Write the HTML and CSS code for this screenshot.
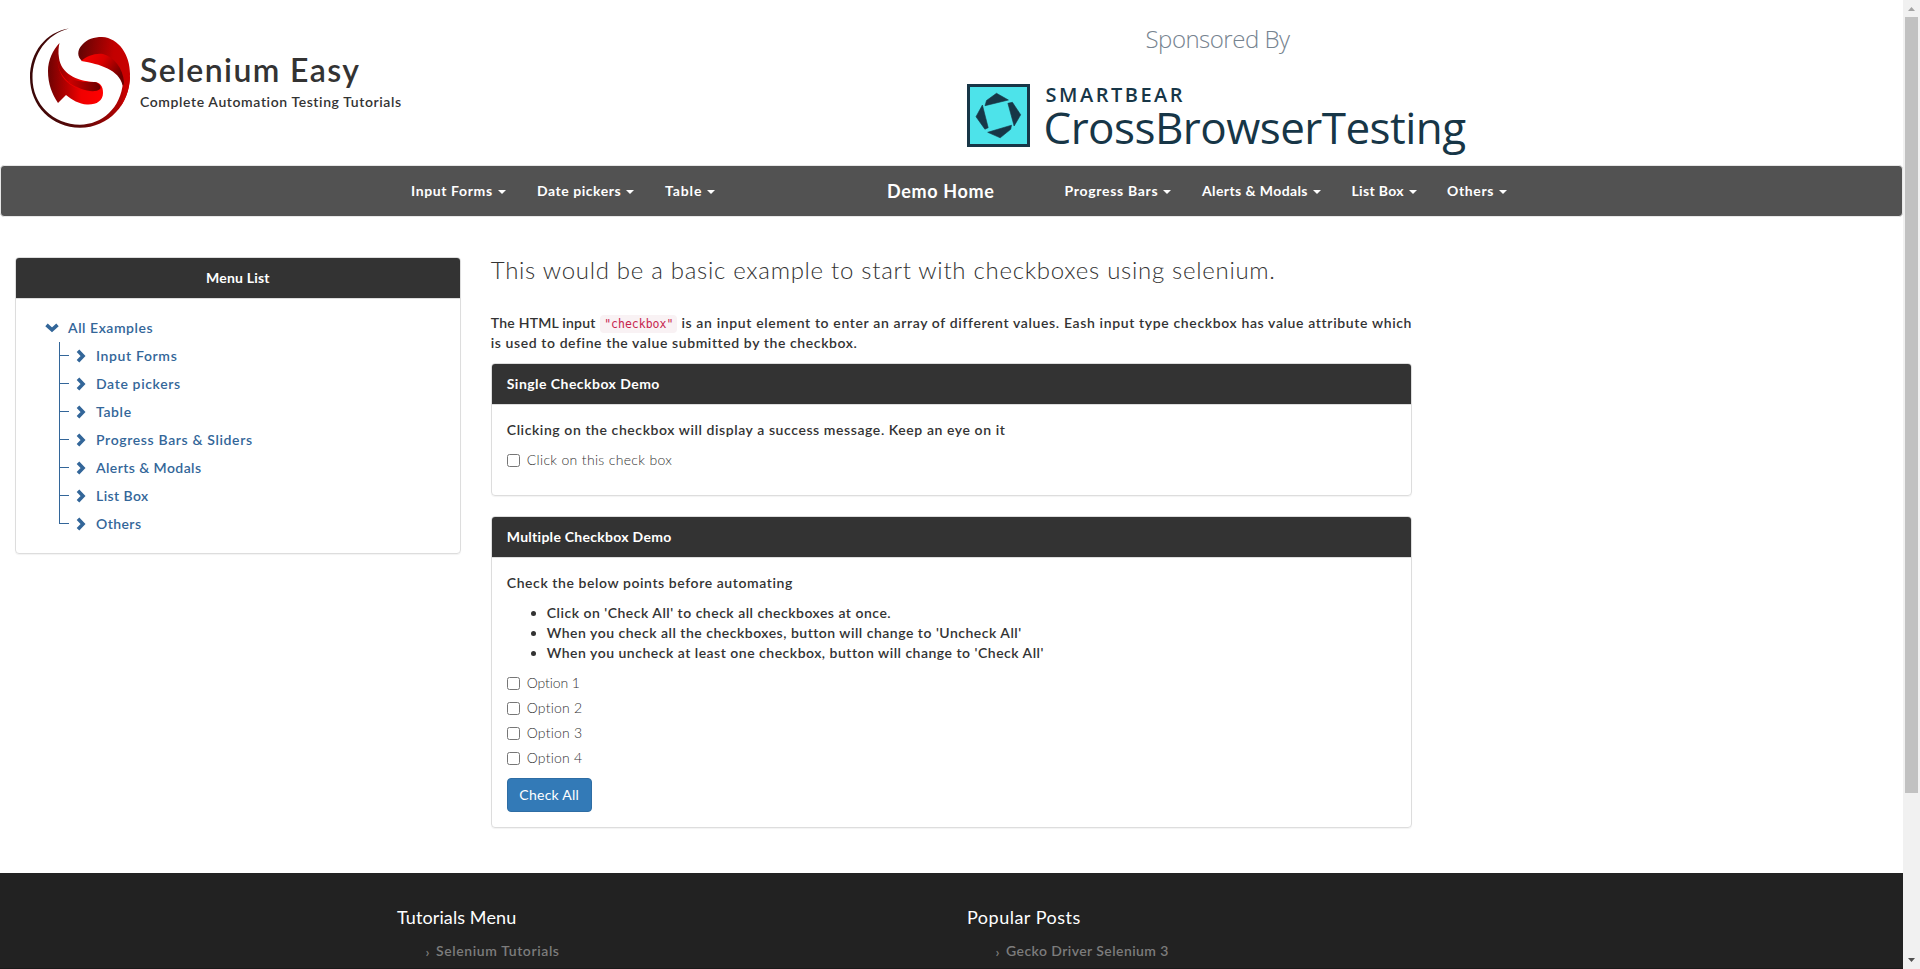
FILE: index.html
```html
<!DOCTYPE html>
<html lang="en">
<head>
<meta charset="utf-8">
<title>Selenium Easy</title>
<link rel="stylesheet" href="styles.css">
</head>
<body>
<div class="page">
  <header class="header">
    <a class="brand">
      <svg class="brand-logo" width="100" height="100" viewBox="0 0 100 100">
        <defs>
          <linearGradient id="ring" x1="0" y1="0" x2="1" y2="0">
            <stop offset="0" stop-color="#3a0808"/><stop offset=".5" stop-color="#5a0808"/><stop offset="1" stop-color="#c80000"/>
          </linearGradient>
          <linearGradient id="cap" x1="0" y1="0" x2="1" y2=".2">
            <stop offset="0" stop-color="#5c0404"/><stop offset=".7" stop-color="#c20000"/><stop offset="1" stop-color="#c80000"/>
          </linearGradient>
          <linearGradient id="band" x1="0" y1="0" x2="1" y2=".5">
            <stop offset="0" stop-color="#ff0000"/><stop offset=".5" stop-color="#d80000"/><stop offset="1" stop-color="#700000"/>
          </linearGradient>
          <linearGradient id="tail" x1="0" y1="0" x2="1" y2="0">
            <stop offset="0" stop-color="#6e0303"/><stop offset=".35" stop-color="#b80000"/><stop offset=".6" stop-color="#f00000"/><stop offset="1" stop-color="#ff0000"/>
          </linearGradient>
          <linearGradient id="fold" x1="0" y1="0" x2="1" y2="0">
            <stop offset="0" stop-color="#d00000"/><stop offset="1" stop-color="#6a0000"/>
          </linearGradient>
        </defs>
        <path fill="url(#ring)" d="M39 .5C16 4 0 24 0 49.500C0 78 22 99.700 50 99.700C79 99.700 100 76 100 48L93 54C91 80 72 96.500 50 96.700C23 96.500 2.500 76 2.500 50C2.500 26 17 6 39 .5Z"/>
        <path fill="url(#cap)" d="M52 33C47 29 47 22 52 17C57 11 64 9 72 9C89 10 100 27 100 46C100 60 96 70 91 78C94 68 94 60 92.500 54C89 40 76 34 52 33Z"/>
        <path fill="url(#band)" d="M51 33C57 28 65 25 73 26C84 29 93 40 94 54C94 57 93 58 92.500 57C89 42 70 36 51 33Z"/>
        <path fill="url(#tail)" d="M29.500 15C23 22 18 32 18 43C18 56 22 66 28 75L36 67C42 72 49 76 57 76.500C66 77 73 73 73 65C73 58 70 54 64 54C46 53 31 45 29 30C28 24 28.500 19 29.500 15Z"/>
        <path fill="#ee0000" d="M29.500 15C26 29 27 43 35 52C44 61 56 65 68 62C58 66 42 60 33 48C26 39 27 25 29.500 15Z"/>
        <path fill="url(#fold)" d="M42 51C49 54 57 54 65 54C69 55 72 59 70 61C64 66 50 62 38 54Z"/>
      </svg>
      <span class="brand-text">
        <span class="brand-name">Selenium Easy</span>
        <span class="brand-tag">Complete Automation Testing Tutorials</span>
      </span>
    </a>
    <div class="sponsor">
      <div class="sponsor-by">Sponsored By</div>
      <div class="sponsor-row">
        <svg width="63" height="63" viewBox="0 0 63 63">
          <rect x="1.500" y="1.500" width="60" height="60" fill="#4de3ea" stroke="#173647" stroke-width="3"/>
          <g fill="#173647" stroke="#173647" stroke-width=".6" stroke-linejoin="round">
            <path d="M18 21.700L19.500 16.500L29.500 9.300L41.400 16Z"/>
            <path d="M40.900 19.300L45.400 18.300L53.700 30.800L47.100 42Z"/>
            <path d="M44.500 41.200L43.700 45.300L33.200 53.800L20.700 48.300Z"/>
            <path d="M15.400 21L21.200 43.700L17.900 45.200L9 32.700Z"/>
          </g>
        </svg>
        <div class="sponsor-text">
          <span class="sponsor-maker">SMARTBEAR</span>
          <span class="sponsor-name">CrossBrowserTesting</span>
        </div>
      </div>
    </div>
  </header>

  <nav class="navbar">
    <a class="n1"><span>Input Forms</span><i class="caret"></i></a>
    <a class="n2"><span>Date pickers</span><i class="caret"></i></a>
    <a class="n3"><span>Table</span><i class="caret"></i></a>
    <a class="home">Demo Home</a>
    <a class="n4"><span>Progress Bars</span><i class="caret"></i></a>
    <a class="n5"><span>Alerts &amp; Modals</span><i class="caret"></i></a>
    <a class="n6"><span>List Box</span><i class="caret"></i></a>
    <a class="n7"><span>Others</span><i class="caret"></i></a>
  </nav>

  <main class="content">
    <aside class="panel menu">
      <div class="panel-heading menu-heading">Menu List</div>
      <div class="menu-body">
        <div class="root"><svg width="14" height="10" viewBox="0 0 14 10"><path d="M1.500 1.800L7 6.800L12.500 1.800" fill="none" stroke="#336699" stroke-width="3.600"/></svg><span>All Examples</span></div>
        <ul class="tree">
          <li><svg class="chev" width="10" height="14" viewBox="0 0 10 14"><path d="M2 1.800L7 7L2 12.200" fill="none" stroke="#336699" stroke-width="3.600"/></svg><span>Input Forms</span></li>
          <li><svg class="chev" width="10" height="14" viewBox="0 0 10 14"><path d="M2 1.800L7 7L2 12.200" fill="none" stroke="#336699" stroke-width="3.600"/></svg><span>Date pickers</span></li>
          <li><svg class="chev" width="10" height="14" viewBox="0 0 10 14"><path d="M2 1.800L7 7L2 12.200" fill="none" stroke="#336699" stroke-width="3.600"/></svg><span>Table</span></li>
          <li><svg class="chev" width="10" height="14" viewBox="0 0 10 14"><path d="M2 1.800L7 7L2 12.200" fill="none" stroke="#336699" stroke-width="3.600"/></svg><span>Progress Bars &amp; Sliders</span></li>
          <li class="tight"><svg class="chev" width="10" height="14" viewBox="0 0 10 14"><path d="M2 1.800L7 7L2 12.200" fill="none" stroke="#336699" stroke-width="3.600"/></svg><span>Alerts &amp; Modals</span></li>
          <li class="tight"><svg class="chev" width="10" height="14" viewBox="0 0 10 14"><path d="M2 1.800L7 7L2 12.200" fill="none" stroke="#336699" stroke-width="3.600"/></svg><span>List Box</span></li>
          <li class="tight"><svg class="chev" width="10" height="14" viewBox="0 0 10 14"><path d="M2 1.800L7 7L2 12.200" fill="none" stroke="#336699" stroke-width="3.600"/></svg><span>Others</span></li>
        </ul>
      </div>
    </aside>

    <section class="main">
      <h3>This would be a basic example to start with checkboxes using selenium.</h3>
      <p class="intro"><span class="lead">The HTML input</span><code>"checkbox"</code>is an input element to enter an array of different values. Eash input type checkbox has value attribute which<br><span class="line2">is used to define the value submitted by the checkbox.</span></p>

      <div class="panel">
        <div class="panel-heading">Single Checkbox Demo</div>
        <div class="panel-body">
          <p class="hint">Clicking on the checkbox will display a success message. Keep an eye on it</p>
          <label class="check single"><input type="checkbox"><span>Click on this check box</span></label>
        </div>
      </div>

      <div class="panel">
        <div class="panel-heading multi">Multiple Checkbox Demo</div>
        <div class="panel-body">
          <p class="hint">Check the below points before automating</p>
          <ul class="points">
            <li>Click on 'Check All' to check all checkboxes at once.</li>
            <li>When you check all the checkboxes, button will change to 'Uncheck All'</li>
            <li>When you uncheck at least one checkbox, button will change to 'Check All'</li>
          </ul>
          <div class="options">
            <label class="check first"><input type="checkbox"><span>Option 1</span></label>
            <label class="check"><input type="checkbox"><span>Option 2</span></label>
            <label class="check"><input type="checkbox"><span>Option 3</span></label>
            <label class="check"><input type="checkbox"><span>Option 4</span></label>
          </div>
          <button class="btn" type="button">Check All</button>
        </div>
      </div>
    </section>
  </main>

  <footer class="footer">
    <div class="footer-col">
      <h4>Tutorials Menu</h4>
      <a><i>›</i><span>Selenium Tutorials</span></a>
    </div>
    <div class="footer-col posts">
      <h4>Popular Posts</h4>
      <a><i>›</i><span>Gecko Driver Selenium 3</span></a>
    </div>
  </footer>
</div>
<div class="scrollbar">
  <svg width="17" height="17" viewBox="0 0 17 17"><path d="M5 11L8.500 7L12 11Z" fill="#a3a3a3"/></svg>
  <div class="thumb"></div>
  <svg class="down" width="17" height="17" viewBox="0 0 17 17"><path d="M5 6L8.500 10L12 6Z" fill="#505050"/></svg>
</div>
</body>
</html>
```

FILE: styles.css
```css
* { box-sizing: border-box; }
body {
  margin: 0;
  height: 969px;
  overflow: hidden;
  display: flex;
  background: #fff;
  color: #333;
  font: 600 14px/20px Lato, "Open Sans", sans-serif;
  letter-spacing: 0.6px;
}
.page { width: 1903px; height: 969px; overflow: hidden; display: flex; flex-direction: column; }

.header { height: 165px; display: flex; flex: none; }
.brand { display: flex; width: 965px; padding: 28px 0 0 30px; }
.brand-logo { flex: none; }
.brand-text { display: flex; flex-direction: column; padding: 22px 0 0 10px; }
.brand-name { font-size: 32px; line-height: 40px; letter-spacing: 1.4px; }
.brand-tag { margin-top: 2px; letter-spacing: 0.6px; }
.sponsor { font-family: "Open Sans", sans-serif; padding-left: 2px; }
.sponsor-by {
  margin: 22px 0 0 178.500px;
  font-size: 24px; line-height: 34px; font-weight: 300;
  letter-spacing: -0.5px; color: #76838f;
}
.sponsor-row { display: flex; margin-top: 28px; color: #173647; }
.sponsor-text { display: flex; flex-direction: column; padding-left: 15.500px; }
.sponsor-maker { font-size: 20px; line-height: 21px; letter-spacing: 2.5px; }
.sponsor-name { margin-left: -2px; font-size: 44px; line-height: 44px; font-weight: 400; letter-spacing: -0.540px; }

.navbar {
  flex: none;
  height: 52px;
  padding-left: 395px;
  border: 1px solid #e7e7e7;
  border-radius: 4px;
  background: #525252;
  color: #fff;
  font-weight: 700;
  display: grid;
  grid-template-columns: 126px 128px 222px 177.500px 137.500px 149.500px 95.500px 90px;
}
.navbar a { display: flex; align-items: center; padding-left: 15px; white-space: nowrap; }
.caret { margin: 1px 0 0 5px; border: 4px solid transparent; border-top-color: #fff; border-bottom: 0; }
.n1 { letter-spacing: 0.62px; }
.n2 { letter-spacing: 0.53px; }
.n3 { letter-spacing: 0.9px; }
.navbar .home { font-size: 18px; letter-spacing: 0.66px; }
.n4 { letter-spacing: 0.7px; }
.n5 { letter-spacing: 0.4px; }
.n6 { letter-spacing: 0.33px; }
.n7 { letter-spacing: 0.65px; }

.content { flex: none; height: 656px; display: flex; }
.panel {
  border: 1px solid #ddd;
  border-radius: 4px;
  box-shadow: 0 1px 1px rgba(0, 0, 0, .05);
  margin-bottom: 20px;
}
.panel-heading {
  height: 41px;
  padding: 10px 15px;
  border-bottom: 1px solid #ddd;
  border-radius: 3px 3px 0 0;
  background: #333;
  color: #fff;
  font-weight: 700;
  letter-spacing: 0.46px;
}
.panel-heading.multi { letter-spacing: 0.28px; }
.menu { width: 445.750px; height: 297px; margin: 40px 15px 0; flex: none; }
.menu-heading { text-align: center; letter-spacing: 0.2px; }
.menu-body { padding: 15px 0 0 29px; color: #369; }
.root { height: 28px; display: flex; align-items: center; }
.root span { margin-left: 9px; letter-spacing: 0.54px; }
.tree { list-style: none; margin: 0 0 0 14px; padding: 0; }
.tree li {
  height: 28px;
  display: flex;
  align-items: center;
  background:
    linear-gradient(#369, #369) 0 0 / 1px 100% no-repeat,
    linear-gradient(#369, #369) 0 13px / 10px 1px no-repeat;
}
.tree li:last-child {
  background:
    linear-gradient(#369, #369) 0 0 / 1px 13px no-repeat,
    linear-gradient(#369, #369) 0 13px / 10px 1px no-repeat;
}
.tree .chev { margin: 0 0 1px 17px; }
.tree span { margin-left: 10px; letter-spacing: 0.64px; }
.tree .tight span { letter-spacing: 0.42px; }

.main { width: 951.500px; padding: 0 15px; }
h3 { margin: 40px 0 30px; font-size: 24px; line-height: 26px; font-weight: 300; letter-spacing: 0.71px; white-space: nowrap; }
p { margin: 0 0 10px; white-space: nowrap; }
.intro { letter-spacing: 0.635px; }
.intro .lead { letter-spacing: 0.23px; }
.intro .line2 { letter-spacing: 0.59px; }
code {
  margin: 0 4px 0 4.500px;
  padding: 2px 4px;
  border-radius: 4px;
  background: #f9f2f4;
  color: #c7254e;
  font: 400 11.500px "DejaVu Sans Mono", monospace;
  letter-spacing: 0;
}
.panel-body { padding: 15px; }
.hint { letter-spacing: 0.58px; }
.check { display: flex; height: 20px; margin-bottom: 5px; font-weight: 300; letter-spacing: 0.2px; }
.check input { margin: 4px 7px 0 0; width: 13px; height: 13px; flex: none; }
.check.single { margin-bottom: 10px; letter-spacing: 0.33px; }
.check.first { letter-spacing: -0.1px; }
.points { margin: 0 0 10px; padding-left: 40px; letter-spacing: 0.5px; }
.btn {
  display: block;
  width: 85px;
  height: 34px;
  margin-top: 10px;
  padding: 0;
  border: 1px solid #2e6da4;
  border-radius: 4px;
  background: #337ab7;
  color: #fff;
  font: 400 14px/20px Lato, sans-serif;
  letter-spacing: 0.25px;
}

.footer { flex: 1; padding: 34px 0 0 397px; background: #222; border-bottom: 1px solid #1a1a1a; display: flex; color: #7c7c7c; }
.footer-col { width: 570px; flex: none; }
.footer h4 { margin: 0 0 14px; font-size: 18px; line-height: 20px; font-weight: 400; letter-spacing: 0.1px; color: #fff; }
.posts h4 { letter-spacing: 0.5px; }
.footer a { display: flex; padding-left: 28.500px; }
.footer i { width: 10.500px; font-style: normal; letter-spacing: 0; line-height: 22px; }
.posts a { letter-spacing: 0.43px; }

.scrollbar { width: 17px; height: 969px; background: #f1f1f1; display: flex; flex-direction: column; align-items: center; }
.thumb { width: 13px; height: 776px; background: #c1c1c1; }
.scrollbar .down { margin-top: auto; }
```
